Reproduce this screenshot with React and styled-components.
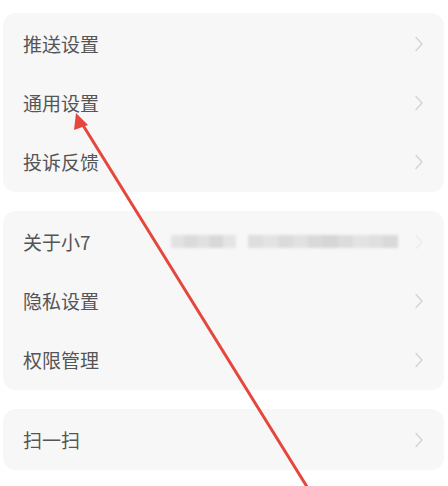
import React from 'react'
import styled, { createGlobalStyle } from 'styled-components'

const GlobalStyle = createGlobalStyle`
  html, body {
    margin: 0;
    padding: 0;
    background: #ffffff;
  }
  body {
    font-family: "Noto Sans CJK SC", "Noto Sans", sans-serif;
  }
`

const groups = [
  ['推送设置', '通用设置', '投诉反馈'],
  ['关于小7', '隐私设置', '权限管理'],
  ['扫一扫'],
]

// mosaic shades for the blurred version text
const mosaic = [
  { w: 13, cells: ['#e2e2e2', '#dadada', '#e0e0e0', '#d8d8d8', '#e4e4e4'] },
  { w: 15, cells: ['#dedede', '#e3e3e3', '#dbdbdb', '#e1e1e1', '#d9d9d9', '#d6d6d6', '#dcdcdc', '#e3e3e3', '#dfdfdf', '#d9d9d9'] },
]

function Chevron({ faint }) {
  return (
    <ChevronIcon width="10" height="16" viewBox="0 0 10 16" $faint={faint}>
      <path d="M2 1.5 L8 8 L2 14.5" fill="none" stroke="currentColor" strokeWidth="1.3" strokeLinecap="round" strokeLinejoin="round" />
    </ChevronIcon>
  )
}

function App() {
  return (
    <Page>
      <GlobalStyle />
      {groups.map((items, gi) => (
        <Card key={gi}>
          {items.map((label) => (
            <Row key={label}>
              <Label>{label}</Label>
              {label === '关于小7' && (
                <Blurred>
                  {mosaic.map((block, i) => (
                    <Blob key={i}>
                      {block.cells.map((c, j) => (
                        <Cell key={j} $c={c} $w={block.w} />
                      ))}
                    </Blob>
                  ))}
                </Blurred>
              )}
              <Chevron faint={label === '关于小7'} />
            </Row>
          ))}
        </Card>
      ))}
      <Arrow width="448" height="486" viewBox="0 0 448 486">
        <line x1="309" y1="490" x2="81" y2="122" stroke="#e6473d" strokeWidth="3" strokeLinecap="round" />
        <polygon points="76,113 88,125 74,130" fill="#e6473d" />
      </Arrow>
    </Page>
  )
}

const Page = styled.div`
  position: relative;
  width: 448px;
  height: 486px;
  overflow: hidden;
  padding: 13px 4px 0 3px;
  box-sizing: border-box;
  display: flex;
  flex-direction: column;
  gap: 19px;
`

const Card = styled.div`
  background: #f7f7f7;
  border-radius: 13px;
  padding: 1px 0;
`

const Row = styled.div`
  height: 59px;
  display: flex;
  align-items: center;
  padding: 0 20px;
`

const Label = styled.span`
  flex: 1;
  font-size: 19px;
  color: #555555;
`

const Blurred = styled.div`
  display: flex;
  gap: 12px;
  margin-right: 16px;
  filter: blur(1.5px);
`

const Blob = styled.div`
  display: flex;
  height: 13px;
`

const Cell = styled.div`
  width: ${(p) => p.$w}px;
  height: 100%;
  background: ${(p) => p.$c};
`

const ChevronIcon = styled.svg`
  color: ${(p) => (p.$faint ? '#ebebeb' : '#d2d2d2')};
  flex: none;
`

const Arrow = styled.svg`
  position: absolute;
  left: 0;
  top: 0;
  pointer-events: none;
`

export default App
